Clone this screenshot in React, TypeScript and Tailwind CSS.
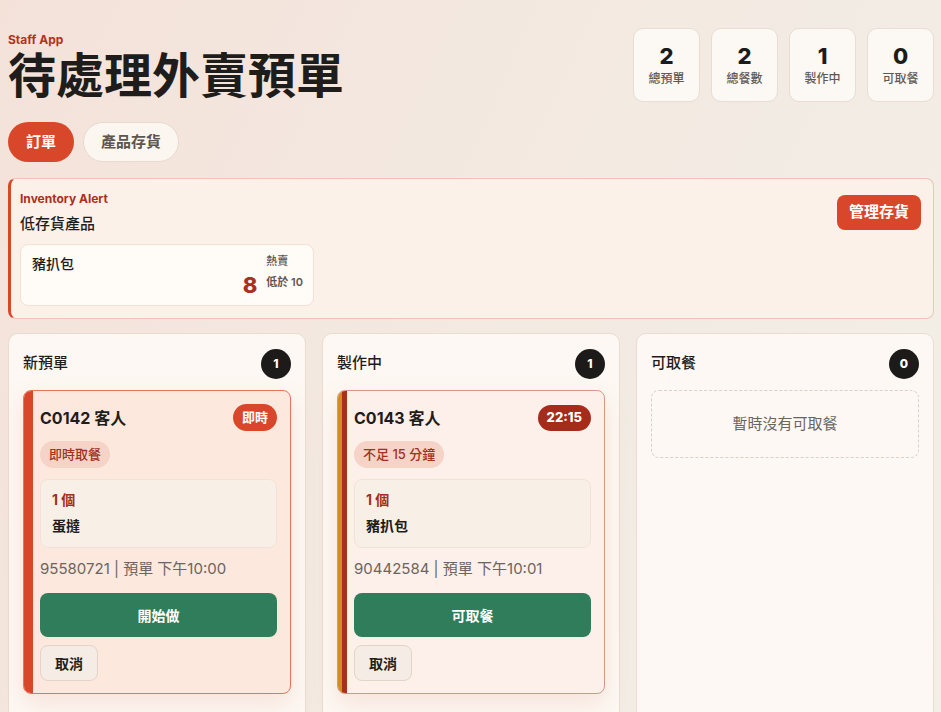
import React from "react";

const font = "font-['Inter','Noto_Sans_CJK_TC',sans-serif]";

function Stat({ value, label }: { value: string; label: string }) {
  return (
    <div className="flex h-[74px] w-[67px] flex-col items-center justify-center rounded-[10px] border border-[#e9dcd2] bg-[#fcf8f3]">
      <div className="text-[22px] font-extrabold leading-[26px] text-[#1d1b1a]">{value}</div>
      <div className="mt-[2px] text-[12px] font-medium leading-4 text-[#5f5853]">{label}</div>
    </div>
  );
}

type Order = {
  code: string;
  badge: string;
  tag: string;
  item: string;
  meta: string;
  action: string;
  variant: "new" | "cooking";
};

function OrderCard({ o }: { o: Order }) {
  const isNew = o.variant === "new";
  return (
    <div
      className={
        isNew
          ? "relative overflow-hidden rounded-[8px] border border-[#e9735c] bg-[#fce8dd] pl-[16px] pr-[13px] pt-[13px] pb-[12px] shadow-[0_10px_24px_rgba(214,140,110,0.18)]"
          : "relative overflow-hidden rounded-[8px] border border-[#d9958a] bg-[#fdefe9] pl-[16px] pr-[13px] pt-[13px] pb-[12px] shadow-[0_10px_24px_rgba(214,140,110,0.18)]"
      }
    >
      {isNew ? (
        <div className="absolute inset-y-0 left-0 w-[9px] bg-[#d9472b]" />
      ) : (
        <div className="absolute inset-y-0 left-0 flex w-[9px]">
          <div className="w-[4px] bg-[#d58a22]" />
          <div className="w-[5px] bg-[#a9301d]" />
        </div>
      )}
      <div className="flex h-[27px] items-center justify-between">
        <div className="text-[16px] font-bold text-[#1f1d1b]">{o.code}</div>
        <div
          className={
            isNew
              ? "flex h-[27px] items-center rounded-full bg-[#d9472b] px-[9px] text-[13px] font-bold text-white"
              : "flex h-[26px] items-center rounded-full bg-[#a52b1b] px-[9px] text-[13px] font-extrabold text-white"
          }
        >
          {o.badge}
        </div>
      </div>
      <div className="mt-[10px] flex">
        <div className="flex h-[27px] items-center rounded-full bg-[#f5d3c7] px-[9px] text-[13px] font-medium text-[#a3301d]">
          {o.tag}
        </div>
      </div>
      <div className="mt-[11px] rounded-[8px] border border-[#f1e2d7] bg-[#f8f0e7] px-[11px] pt-[10px] pb-[11px]">
        <div className="text-[14px] font-bold leading-5 text-[#a3301d]">1 個</div>
        <div className="mt-[6px] text-[14px] font-bold leading-5 text-[#1f1d1b]">{o.item}</div>
      </div>
      <div className="mt-[10px] text-[15px] leading-[22px] text-[#6b645f]">{o.meta}</div>
      <button className="mt-[13px] flex h-[44px] w-full items-center justify-center rounded-[8px] bg-[#2f7d5b] text-[14px] font-bold text-white">
        {o.action}
      </button>
      <button className="mt-[8px] flex h-[36px] w-[58px] items-center justify-center rounded-[8px] border border-[#e2d4c9] bg-[#f4ece5] text-[14px] font-bold text-[#1f1d1b]">
        取消
      </button>
    </div>
  );
}

function Column({ title, count, children }: { title: string; count: number; children: React.ReactNode }) {
  return (
    <div className="min-h-[400px] rounded-[10px] border border-[#eadcd1] bg-[#fdf8f3] px-[14px] pt-[14px] pb-4">
      <div className="flex h-[31px] items-center justify-between">
        <div className="text-[15px] font-medium text-[#1f1d1b]">{title}</div>
        <div className="flex h-[30px] w-[30px] items-center justify-center rounded-full bg-[#1c1b1a] text-[12px] font-extrabold text-white">
          {count}
        </div>
      </div>
      <div className="mt-[11px]">{children}</div>
    </div>
  );
}

export default function App() {
  const orders: Order[] = [
    {
      code: "C0142 客人",
      badge: "即時",
      tag: "即時取餐",
      item: "蛋撻",
      meta: "95580721 | 預單 下午10:00",
      action: "開始做",
      variant: "new",
    },
    {
      code: "C0143 客人",
      badge: "22:15",
      tag: "不足 15 分鐘",
      item: "豬扒包",
      meta: "90442584 | 預單 下午10:01",
      action: "可取餐",
      variant: "cooking",
    },
  ];

  return (
    <div
      className={`${font} min-h-[712px] overflow-hidden bg-[linear-gradient(115deg,#f4e2d9_0%,#f3e9e1_45%,#f2efe7_100%)] px-2 pt-[28px] text-[#1f1d1b]`}
    >
      <div className="flex items-start justify-between">
        <div>
          <div className="mt-[4px] text-[12px] font-bold leading-4 text-[#b0331f]">Staff App</div>
          <h1 className="text-[48px] font-bold leading-[56px] text-[#1f1d1b]">待處理外賣預單</h1>
          <div className="mt-[18px] flex gap-[9px]">
            <button className="flex h-[40px] items-center rounded-full bg-[#d9472b] px-[18px] text-[15px] font-bold text-white">
              訂單
            </button>
            <button className="flex h-[40px] items-center rounded-full border border-[#ead9ce] bg-[#fcf6f0] px-[17px] text-[15px] font-bold text-[#5d5650]">
              產品存貨
            </button>
          </div>
        </div>
        <div className="mr-[-1px] flex gap-[11px]">
          <Stat value="2" label="總預單" />
          <Stat value="2" label="總餐數" />
          <Stat value="1" label="製作中" />
          <Stat value="0" label="可取餐" />
        </div>
      </div>

      <div className="mt-4 mr-[-1px] flex justify-between rounded-[8px] border border-[#f0c3b2] border-l-[3px] border-l-[#d9472b] bg-[#fcf1e9] pl-[9px] pr-[12px] pt-[12px] pb-[12px]">
        <div>
          <div className="text-[12px] font-bold leading-4 text-[#a9301d]">Inventory Alert</div>
          <div className="mt-[6px] text-[15px] font-medium leading-[22px] text-[#1f1d1b]">低存貨產品</div>
          <div className="mt-[9px] flex h-[62px] w-[294px] justify-between rounded-[8px] border border-[#f6dfd3] bg-[#fffbf6] pl-[11px] pr-[10px] pt-[9px]">
            <div className="text-[14px] font-medium leading-5 text-[#1f1d1b]">豬扒包</div>
            <div className="flex items-start gap-[9px]">
              <div className="mt-[20px] text-[22px] font-extrabold leading-[22px] text-[#a9301d]">8</div>
              <div className="flex flex-col gap-[7px]">
                <div className="text-[11px] font-medium leading-[14px] text-[#5d5650]">熱賣</div>
                <div className="text-[11px] font-semibold leading-[14px] text-[#5d5650]">低於 10</div>
              </div>
            </div>
          </div>
        </div>
        <div className="pt-[4px]">
          <button className="flex h-[35px] items-center rounded-[8px] bg-[#d9472b] px-[12px] text-[15px] font-bold text-white">
            管理存貨
          </button>
        </div>
      </div>

      <div className="mt-[14px] mr-[-1px] grid grid-cols-3 gap-4">
        <Column title="新預單" count={1}>
          <OrderCard o={orders[0]} />
        </Column>
        <Column title="製作中" count={1}>
          <OrderCard o={orders[1]} />
        </Column>
        <Column title="可取餐" count={0}>
          <div className="flex h-[68px] items-center justify-center rounded-[8px] border border-dashed border-[#dccfc5] text-[15px] text-[#6b645f]">
            暫時沒有可取餐
          </div>
        </Column>
      </div>
    </div>
  );
}
